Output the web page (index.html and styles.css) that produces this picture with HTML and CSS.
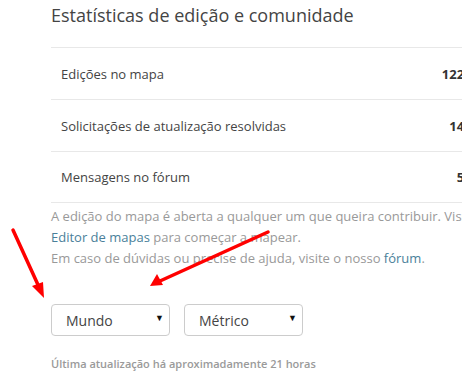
FILE: index.html
```html
<!DOCTYPE html>
<html lang="pt">
<head>
    <meta charset="UTF-8">
    <meta name="viewport" content="width=device-width, initial-scale=1.0">
    <link rel="stylesheet" href="styles.css">
    <title>Estatísticas</title>
</head>
<body>
    <section id="stats" class="stats">
        <h2 class="title">Estatísticas de edição e comunidade</h2>

        <div class="rows">
            <div class="row">
                <span class="label">Edições no mapa</span>
                <span class="value">12206</span>
            </div>
            <div class="row">
                <span class="label">Solicitações de atualização resolvidas</span>
                <span class="value">1437</span>
            </div>
            <div class="row">
                <span class="label">Mensagens no fórum</span>
                <span class="value">512</span>
            </div>
        </div>

        <p class="info">
            A edição do mapa é aberta a qualquer um que queira contribuir. Visite o<br>
            <a href="#">Editor de mapas</a> para começar a mapear.<br>
            Em caso de dúvidas ou precise de ajuda, visite o nosso <a href="#">fórum</a>.
        </p>

        <div class="filters">
            <div class="select">Mundo <span class="caret">&#9660;</span></div>
            <div class="select">Métrico <span class="caret">&#9660;</span></div>
        </div>

        <p class="updated">Última atualização há aproximadamente 21 horas</p>
    </section>

    <!-- annotation arrows drawn over the page -->
    <svg class="arrows" width="462" height="373" viewBox="0 0 462 373">
        <g stroke="#ff0000" stroke-width="3.5" stroke-linecap="round" fill="none">
            <line x1="13" y1="230" x2="39" y2="287"/>
            <line x1="268" y1="232" x2="160" y2="281"/>
        </g>
        <g fill="#ff0000">
            <polygon points="44,298 32,286 43,282"/>
            <polygon points="150,286 157,274 163,285"/>
        </g>
    </svg>
</body>
</html>
```

FILE: styles.css
```css
* {
    box-sizing: border-box;
}

html, body {
    margin: 0;
    padding: 0;
    overflow: hidden;
    background-color: #ffffff;
    font-family: "Open Sans", "Liberation Sans", sans-serif;
}

body {
    width: 462px;
    height: 373px;
    position: relative;
}

.stats {
    width: 438px;
    margin-left: 51px;
}

.title {
    margin: 0;
    padding-top: 3px;
    height: 47px;

    font-size: 18px;
    font-weight: 400;
    line-height: 24px;
    color: #444444;
}

.rows {
    width: 438px;
}

.row {
    height: 52px;
    padding: 0 10px;

    display: flex;
    justify-content: space-between;
    align-items: center;

    border-top: 1px solid #e8e8e8;

    font-size: 13px;
    color: #444444;
}

.row:last-child {
    border-bottom: 1px solid #e8e8e8;
}

.value {
    font-weight: 700;
    color: #333333;
}

.info {
    margin: 3px 0 0 0;

    font-size: 13px;
    line-height: 21px;
    color: #999999;
    white-space: nowrap;
}

.info a {
    color: #4a7f9a;
    text-decoration: none;
}

.filters {
    margin-top: 35px;

    display: flex;
    gap: 14px;
}

.select {
    width: 119px;
    height: 32px;
    padding: 0 5px 0 14px;

    display: flex;
    justify-content: space-between;
    align-items: center;

    border: 1px solid #cccccc;
    border-radius: 4px;

    font-size: 14px;
    color: #444444;
}

.caret {
    font-size: 9px;
    color: #111111;
    margin-top: -5px;
}

.updated {
    margin: 20px 0 0 0;

    font-size: 11px;
    font-weight: 600;
    color: #9a9a9a;
}

.arrows {
    position: absolute;
    top: 0;
    left: 0;
    pointer-events: none;
}
```
